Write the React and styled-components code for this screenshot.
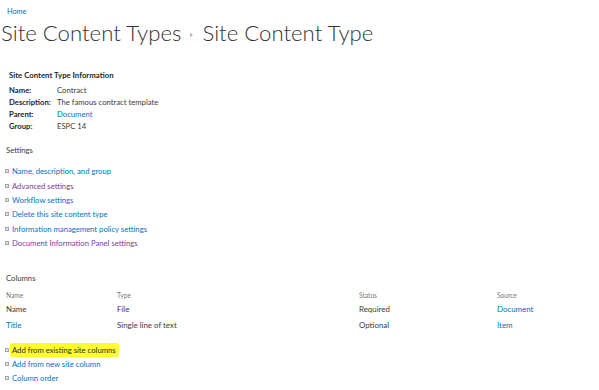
import React from "react";
import styled, { createGlobalStyle } from "styled-components";

const GlobalStyle = createGlobalStyle`
  html, body {
    margin: 0;
    padding: 0;
    background: #fff;
  }
  body {
    font-family: Lato, "Open Sans", sans-serif;
    color: #444;
  }
`;

const Page = styled.div`
  width: 599px;
  height: 390px;
  overflow: hidden;
  padding-top: 6px;
  box-sizing: border-box;
`;

const Crumb = styled.a`
  display: block;
  margin-left: 7px;
  font-size: 7.3px;
  line-height: 11px;
  color: #0072c6;
  text-decoration: none;
`;

const Title = styled.h1`
  display: flex;
  align-items: center;
  margin: 0 0 0 1px;
  font-size: 22.2px;
  font-weight: 300;
  line-height: 32px;
  color: #333;
  white-space: nowrap;
`;

const Arrow = styled.span`
  width: 0;
  height: 0;
  margin: 3px 9px 0 9px;
  border-top: 2.5px solid transparent;
  border-bottom: 2.5px solid transparent;
  border-left: 3.5px solid #b0b0b0;
`;

const Info = styled.div`
  margin: 20px 0 0 9px;
`;

const InfoHead = styled.div`
  font-size: 7.8px;
  font-weight: 700;
  line-height: 12px;
  color: #262626;
  margin-bottom: 3px;
`;

const InfoRow = styled.div`
  display: grid;
  grid-template-columns: 48px 1fr;
  font-size: 7.7px;
  line-height: 12px;
`;

const Label = styled.span`
  font-weight: 700;
  color: #262626;
  white-space: nowrap;
`;

const Value = styled.span`
  color: ${(p) => (p.$link ? "#0072c6" : "#3a3a3a")};
  white-space: nowrap;
`;

const Section = styled.div`
  margin: ${(p) => p.$top}px 0 0 6px;
  font-size: 7.7px;
  line-height: 14px;
  color: #3a3a3a;
`;

const LinkList = styled.ul`
  list-style: none;
  margin: ${(p) => p.$top}px 0 0 0;
  padding: 0 0 0 5px;
`;

const Item = styled.li`
  display: flex;
  align-items: center;
  height: ${(p) => p.$h}px;
  font-size: 7.7px;
  white-space: nowrap;
`;

const Bullet = styled.span`
  width: 2px;
  height: 2px;
  border: 1px solid #a8a8a8;
  background: #e2e2e2;
  margin-right: 3px;
  flex: none;
`;

const ItemLink = styled.a`
  color: ${(p) => (p.$visited ? "#7a3d97" : "#0072c6")};
  text-decoration: none;
  line-height: 14px;
  ${(p) =>
    p.$mark &&
    `
    background: #ffff30;
    color: #2a2a2a;
    padding: 0 3px 0 2px;
    margin-left: -2px;
    border-radius: 2px;
  `}
`;

const Table = styled.div`
  margin: 4px 0 0 6px;
  display: grid;
  grid-template-columns: 111px 242px 138px 1fr;
`;

const HeadCell = styled.div`
  font-size: 6.6px;
  line-height: 12px;
  color: #777;
  white-space: nowrap;
`;

const Cell = styled.div`
  font-size: 7.9px;
  line-height: 16px;
  color: ${(p) => (p.$link ? "#0072c6" : "#3a3a3a")};
  white-space: nowrap;
`;

const info = [
  ["Name:", "Contract"],
  ["Description:", "The famous contract template"],
  ["Parent:", "Document", true],
  ["Group:", "ESPC 14"],
];

const settings = [
  ["Name, description, and group"],
  ["Advanced settings", true],
  ["Workflow settings"],
  ["Delete this site content type"],
  ["Information management policy settings"],
  ["Document Information Panel settings", true],
];

const columns = [
  { name: "Name", type: "File", status: "Required", source: "Document" },
  { name: "Title", type: "Single line of text", status: "Optional", source: "Item", link: true },
];

const columnLinks = [
  ["Add from existing site columns", true],
  ["Add from new site column"],
  ["Column order"],
];

export default function App() {
  return (
    <Page>
      <GlobalStyle />
      <Crumb href="#">Home</Crumb>
      <Title>
        Site Content Types
        <Arrow />
        Site Content Type
      </Title>

      <Info>
        <InfoHead>Site Content Type Information</InfoHead>
        {info.map(([label, value, link]) => (
          <InfoRow key={label}>
            <Label>{label}</Label>
            <Value $link={link}>{value}</Value>
          </InfoRow>
        ))}
      </Info>

      <Section $top={11}>Settings</Section>
      <LinkList $top={7}>
        {settings.map(([text, visited]) => (
          <Item key={text} $h={14.4}>
            <Bullet />
            <ItemLink href="#" $visited={visited}>
              {text}
            </ItemLink>
          </Item>
        ))}
      </LinkList>

      <Section $top={21}>Columns</Section>
      <Table>
        <HeadCell>Name</HeadCell>
        <HeadCell>Type</HeadCell>
        <HeadCell>Status</HeadCell>
        <HeadCell>Source</HeadCell>
        {columns.map((c) => (
          <React.Fragment key={c.name}>
            <Cell $link={c.link}>{c.name}</Cell>
            <Cell>{c.type}</Cell>
            <Cell>{c.status}</Cell>
            <Cell $link>{c.source}</Cell>
          </React.Fragment>
        ))}
      </Table>
      <LinkList $top={10}>
        {columnLinks.map(([text, mark]) => (
          <Item key={text} $h={14}>
            <Bullet />
            <ItemLink href="#" $mark={mark}>
              {text}
            </ItemLink>
          </Item>
        ))}
      </LinkList>
    </Page>
  );
}
